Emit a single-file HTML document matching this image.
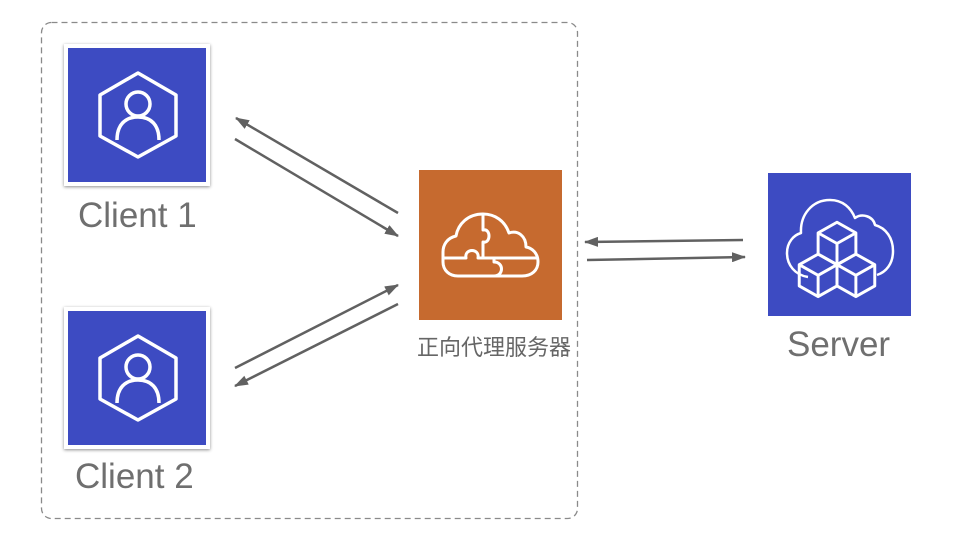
<!DOCTYPE html>
<html><head><meta charset="utf-8"><style>
html,body{margin:0;padding:0;background:#fff;width:962px;height:548px;overflow:hidden}
.t{position:absolute;font-family:"Liberation Sans","Noto Sans CJK SC",sans-serif;color:#6f6f6f;white-space:nowrap;line-height:1}
</style></head><body>
<svg width="962" height="548" style="position:absolute;left:0;top:0">
<defs>
<marker id="a" markerWidth="14" markerHeight="10" refX="13" refY="5" orient="auto" markerUnits="userSpaceOnUse"><path d="M0,0 L14,5 L0,10 Z" fill="#616161"/></marker>
<filter id="s" x="-10%" y="-10%" width="120%" height="120%"><feDropShadow dx="0" dy="1" stdDeviation="1.5" flood-color="#000" flood-opacity="0.45"/></filter>
</defs>
<rect x="41.5" y="22.5" width="536" height="496" rx="10" fill="none" stroke="#8a8a8a" stroke-width="1.3" stroke-dasharray="6,4"/>
<g filter="url(#s)"><rect x="64" y="44" width="146" height="142" fill="#fff"/></g>
<rect x="68" y="48" width="138" height="134" fill="#3d4bc2"/>
<g filter="url(#s)"><rect x="64" y="307" width="146" height="142" fill="#fff"/></g>
<rect x="68" y="311" width="138" height="134" fill="#3d4bc2"/>
<g fill="none" stroke="#fff" stroke-width="3.5" stroke-linejoin="round">
<g id="hx">
<path d="M138,73 L176,95 L176,136 L138,157 L100,136 L100,95 Z"/>
<circle cx="138" cy="104" r="12"/>
<path d="M117,140 C117,125 125,117 138,117 C151,117 159,125 159,140"/>
</g>
<use href="#hx" transform="translate(0,263)"/>
</g>
<rect x="419" y="170" width="143" height="150" fill="#c66a2f"/>
<g fill="none" stroke="#fff" stroke-width="3" stroke-linejoin="round">
<path d="M458,276 L522,276 C532,276 538,270 538,262 C538,253 532,248 526,247 C526,236 518,230 509,233 C505,221 495,214 483,214 C468,214 458,224 456,236 C447,238 443,245 443,252 L443,262 C443,270 449,276 458,276 Z"/>
<path d="M444,258 L466,258 C464,248 480,248 478,258 L494,258 L494,262 C504,262 504,276 494,276"/>
<path d="M483,214 L483,230 C491,228 491,244 483,242 L483,258"/>
<path d="M494,258 L538,258"/>
</g>
<rect x="768" y="173" width="143" height="143" fill="#3d4bc2"/>
<g fill="none" stroke="#fff" stroke-width="2.5" stroke-linejoin="round">
<path d="M808,277 C795,275 787,265 787,253 C787,242 794,235 801,233 C800,215 812,200 830,200 C843,200 851,208 855,218 C862,213 873,216 875,225 C886,228 893,238 893,251 C893,264 886,272 877,275"/>
<g transform="translate(837,260) scale(1.18) translate(-837,-258)">
<path d="M837,226 L853,235 L853,253 L837,262 L821,253 L821,235 Z M821,235 L837,244 L853,235 M837,244 L837,262"/>
<path d="M821,253 L837,262 L837,280 L821,289 L805,280 L805,262 Z M805,262 L821,271 L837,262 M821,271 L821,289"/>
<path d="M853,253 L869,262 L869,280 L853,289 L837,280 L837,262 Z M837,262 L853,271 L869,262 M853,271 L853,289"/>
</g>
</g>
<g stroke="#616161" stroke-width="2.5" fill="none">
<line x1="398" y1="213" x2="236" y2="118" marker-end="url(#a)"/>
<line x1="235" y1="139" x2="398" y2="236" marker-end="url(#a)"/>
<line x1="235" y1="368" x2="398" y2="285" marker-end="url(#a)"/>
<line x1="398" y1="304" x2="235" y2="386" marker-end="url(#a)"/>
<line x1="743" y1="240" x2="585" y2="242" marker-end="url(#a)"/>
<line x1="587" y1="260" x2="745" y2="257" marker-end="url(#a)"/>
</g>
</svg>
<div class="t" style="left:78px;top:198px;font-size:35px">Client 1</div>
<div class="t" style="left:75px;top:459px;font-size:35px">Client 2</div>
<div class="t" style="left:787px;top:327px;font-size:35px">Server</div>
<div class="t" style="left:417px;top:337px;font-size:22px;color:#666">正向代理服务器</div>
</body></html>
